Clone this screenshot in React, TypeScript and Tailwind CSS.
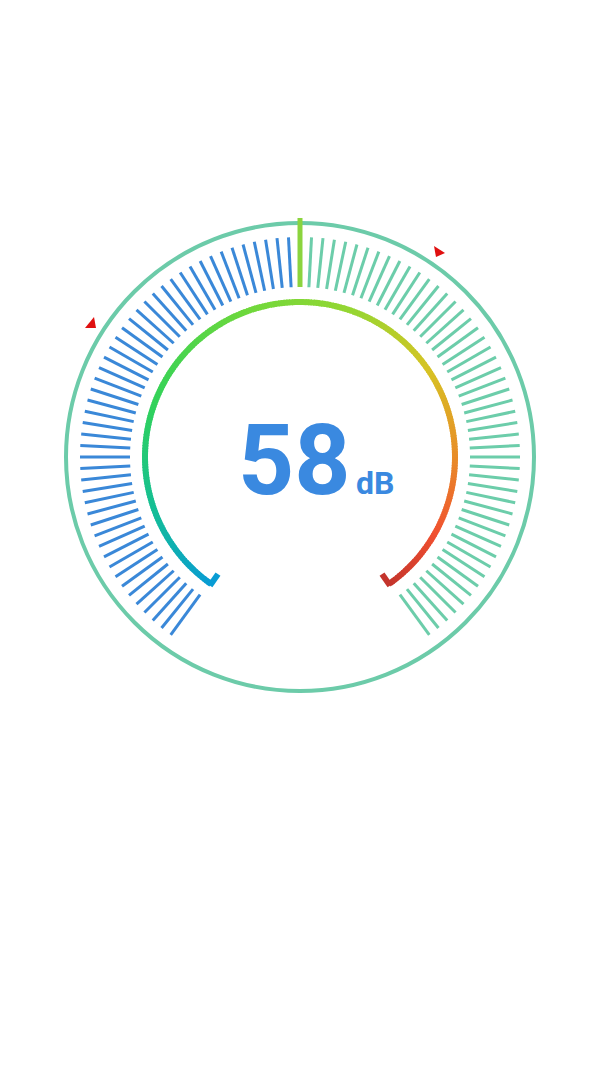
import React from 'react';

const CX = 300;
const CY = 300;

// angle in degrees, measured clockwise from 12 o'clock
function pt(r: number, deg: number) {
  const a = (deg * Math.PI) / 180;
  return { x: CX + r * Math.sin(a), y: CY - r * Math.cos(a) };
}

const stops: [number, [number, number, number]][] = [
  [-145, [8, 156, 212]],
  [-110, [20, 190, 150]],
  [-70, [50, 210, 90]],
  [-20, [110, 216, 60]],
  [20, [150, 214, 50]],
  [55, [214, 196, 36]],
  [90, [232, 140, 40]],
  [120, [240, 80, 48]],
  [145, [196, 52, 44]],
];

function colorAt(deg: number) {
  for (let i = 0; i < stops.length - 1; i++) {
    const [a0, c0] = stops[i];
    const [a1, c1] = stops[i + 1];
    if (deg <= a1) {
      const t = Math.max(0, (deg - a0) / (a1 - a0));
      const c = c0.map((v, k) => Math.round(v + (c1[k] - v) * t));
      return `rgb(${c[0]},${c[1]},${c[2]})`;
    }
  }
  const c = stops[stops.length - 1][1];
  return `rgb(${c[0]},${c[1]},${c[2]})`;
}

function Ticks() {
  const items = [];
  for (let i = -48; i <= 48; i++) {
    if (i === 0) continue;
    const deg = i * 3;
    const a = pt(170, deg);
    const b = pt(220, deg);
    items.push(
      <line
        key={i}
        x1={a.x}
        y1={a.y}
        x2={b.x}
        y2={b.y}
        stroke={i < 0 ? '#3a88d8' : '#6ccdaa'}
        strokeWidth={3}
      />
    );
  }
  const a = pt(170, 0);
  const b = pt(239, 0);
  items.push(<line key="c" x1={a.x} y1={a.y} x2={b.x} y2={b.y} stroke="#8bd43e" strokeWidth={5} />);
  return <g>{items}</g>;
}

function ColorArc() {
  const segs = [];
  const r = 155;
  for (let d = -145; d < 145; d += 1) {
    const a = pt(r, d);
    const b = pt(r, Math.min(145, d + 1.4));
    segs.push(
      <path
        key={d}
        d={`M ${a.x} ${a.y} A ${r} ${r} 0 0 1 ${b.x} ${b.y}`}
        stroke={colorAt(d + 0.5)}
        strokeWidth={6}
        fill="none"
      />
    );
  }
  const l1 = pt(r + 2, -145);
  const l2 = pt(143, -145);
  const r1 = pt(r + 2, 145);
  const r2 = pt(143, 145);
  return (
    <g>
      {segs}
      <line x1={l1.x} y1={l1.y} x2={l2.x} y2={l2.y} stroke={colorAt(-145)} strokeWidth={6} />
      <line x1={r1.x} y1={r1.y} x2={r2.x} y2={r2.y} stroke={colorAt(145)} strokeWidth={6} />
    </g>
  );
}

export default function App() {
  return (
    <div className="w-[600px] h-[1067px] bg-white flex flex-col items-center">
      <svg width={600} height={600} viewBox="0 0 600 600" className="mt-[157px]">
        <circle cx={CX} cy={CY} r={234} fill="none" stroke="#6ccba9" strokeWidth={4} />
        <Ticks />
        <ColorArc />
        {/* limit markers */}
        <polygon points="94,160 85,171 96,171" fill="#e01010" />
        <polygon points="434,89 445,96 436,100" fill="#e01010" />
        <text x={238} y={337} fill="#3a89e0" className="font-['Roboto'] font-bold text-[98px]">
          58
        </text>
        <text x={356} y={337} fill="#3a89e0" className="font-['Roboto'] font-bold text-[32px]">
          dB
        </text>
      </svg>
    </div>
  );
}
